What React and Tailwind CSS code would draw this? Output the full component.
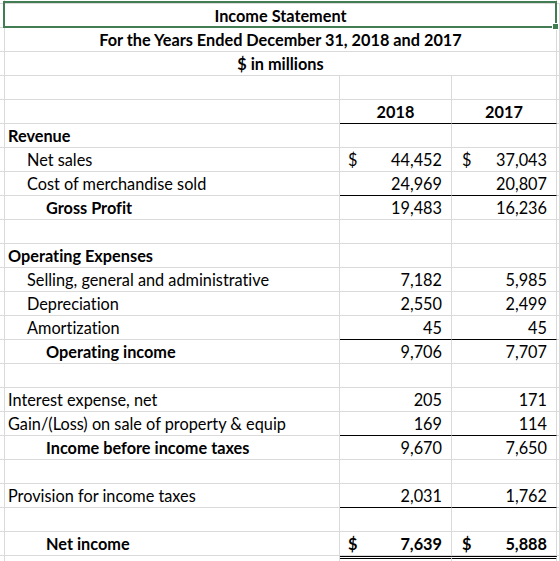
import React from 'react';

const GRID = 'grid grid-cols-[5px_335px_112px_105px_1fr]';
const cell = 'h-6 border-r border-r-[#dadada]';
const gridB = 'border-b border-b-[#dadada]';
const blackB = 'border-b border-b-black';

const rows = [
  { label: 'Revenue', bold: true },
  { label: 'Net sales', indent: 1, b: '44,452', c: '37,043', dollar: true },
  { label: 'Cost of merchandise sold', indent: 1, b: '24,969', c: '20,807', line: true },
  { label: 'Gross Profit', bold: true, indent: 2, b: '19,483', c: '16,236' },
  {},
  { label: 'Operating Expenses', bold: true },
  { label: 'Selling, general and administrative', indent: 1, b: '7,182', c: '5,985' },
  { label: 'Depreciation', indent: 1, b: '2,550', c: '2,499' },
  { label: 'Amortization', indent: 1, b: '45', c: '45', line: true },
  { label: 'Operating income', bold: true, indent: 2, b: '9,706', c: '7,707' },
  {},
  { label: 'Interest expense, net', b: '205', c: '171' },
  { label: 'Gain/(Loss) on sale of property & equip', b: '169', c: '114', line: true },
  { label: 'Income before income taxes', bold: true, indent: 2, b: '9,670', c: '7,650' },
  {},
  { label: 'Provision for income taxes', b: '2,031', c: '1,762', line: true },
  {},
  { label: 'Net income', bold: true, indent: 2, b: '7,639', c: '5,888', dollar: true, strong: true },
];

const indents = ['pl-[3px]', 'pl-[22px]', 'pl-[41px]'];

function Num({ value, dollar, strong, line, pl }) {
  return (
    <div className={`${cell} ${line ? blackB : gridB} flex items-center justify-between pt-[2px] pr-[9px] ${pl} ${strong ? 'font-bold' : ''}`}>
      <span>{dollar ? '$' : ''}</span>
      <span>{value}</span>
    </div>
  );
}

function TitleRow({ children }) {
  return (
    <div className={GRID}>
      <div className={`${cell} ${gridB}`} />
      <div className={`col-span-3 ${cell} ${gridB} flex items-center justify-center pt-[2px] font-bold`}>{children}</div>
      <div className={`${cell} ${gridB}`} />
    </div>
  );
}

export default function App() {
  return (
    <div className="relative w-[560px] h-[561px] overflow-hidden bg-white text-black text-[16.3px] font-['Lato',sans-serif] leading-none [font-variant-ligatures:none]">
      {/* row above, cut off */}
      <div className={GRID}>
        <div className={`h-[4px] border-r border-r-[#dadada] ${gridB}`} />
        <div className={`h-[4px] ${gridB}`} />
        <div className={`h-[4px] ${gridB}`} />
        <div className={`h-[4px] border-r border-r-[#dadada] ${gridB}`} />
        <div className={`h-[4px] ${gridB}`} />
      </div>

      <TitleRow>Income Statement</TitleRow>
      <TitleRow>For the Years Ended December 31, 2018 and 2017</TitleRow>
      <TitleRow>$ in millions</TitleRow>

      <div className={GRID}>
        {[0, 1, 2, 3, 4].map(i => <div key={i} className={`${cell} ${gridB}`} />)}
      </div>

      <div className={GRID}>
        <div className={`${cell} ${gridB}`} />
        <div className={`${cell} ${gridB}`} />
        <div className={`${cell} ${blackB} flex items-center justify-center pt-[2px] font-bold`}>2018</div>
        <div className={`${cell} ${blackB} flex items-center justify-center pt-[2px] font-bold`}>2017</div>
        <div className={`${cell} ${gridB}`} />
      </div>

      {rows.map((r, i) => (
        <div key={i} className={GRID}>
          <div className={`${cell} ${gridB}`} />
          <div className={`${cell} ${gridB} flex items-center pt-[2px] whitespace-nowrap ${indents[r.indent || 0]} ${r.bold ? 'font-bold' : ''}`}>
            {r.label}
          </div>
          <Num value={r.b} dollar={r.dollar} strong={r.strong} line={r.line} pl="pl-[8px]" />
          <Num value={r.c} dollar={r.dollar} strong={r.strong} line={r.line} pl="pl-[10px]" />
          <div className={`${cell} ${gridB}`} />
        </div>
      ))}

      {/* next row, cut off — double rule under net income */}
      <div className={GRID}>
        <div className={cell} />
        <div className={cell} />
        <div className={`${cell} border-t-[3px] border-double border-t-black`} />
        <div className={`${cell} border-t-[3px] border-double border-t-black`} />
        <div className={cell} />
      </div>

      {/* selected cell */}
      <div className="absolute left-[3px] top-[1px] w-[554px] h-[27px] border-2 border-[#427c52] pointer-events-none" />
      <div className="absolute left-[552px] top-[23px] w-[7px] h-[7px] bg-[#427c52] border border-white" />
    </div>
  );
}
